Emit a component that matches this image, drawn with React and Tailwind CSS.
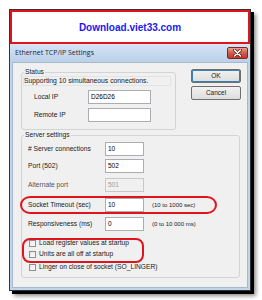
import React from 'react';

const font = { fontFamily: '"Liberation Sans", Arial, sans-serif' };

function TextBox({ value, disabled, className = '' }) {
  return (
    <div
      className={`h-[14px] border flex items-center pl-[2px] text-[6.5px] ${
        disabled
          ? 'border-[#c8c8c8] bg-[#f0f0f0] text-[#a0a0a0]'
          : 'border-[#abadb3] bg-white text-black'
      } ${className}`}
    >
      {value}
    </div>
  );
}

function Checkbox({ label, className = '' }) {
  return (
    <div className={`flex items-center h-[9px] ${className}`}>
      <div className="ml-[1px] w-[7px] h-[7px] border border-[#8e8f8f] bg-gradient-to-br from-[#e6e6e6] to-white" />
      <span className="ml-[3px] text-[6.7px] text-[#222]">{label}</span>
    </div>
  );
}

function Field({ label, value, hint, disabled, className = '' }) {
  return (
    <div className={`flex items-center ${className}`}>
      <span className={`w-[77px] text-[6.7px] ${disabled ? 'text-[#555]' : 'text-[#222]'}`}>{label}</span>
      <TextBox value={value} disabled={disabled} className="w-[39px]" />
      {hint && <span className="ml-[8px] text-[6px] text-[#222]">{hint}</span>}
    </div>
  );
}

export default function App() {
  return (
    <div className="w-[262px] h-[300px] bg-white pt-[9px] pl-[9px]" style={font}>
      <div className="w-[242px] h-[282px] border border-[#333] shadow-[3px_3px_0_#000,5px_5px_4px_rgba(0,0,0,0.45)] flex flex-col">
        {/* banner */}
        <div className="h-[34px] bg-white border-2 border-[#e0141c] flex items-center justify-center">
          <span className="text-[10px] font-bold text-[#1a1aef]">Download.viet33.com</span>
        </div>

        {/* title bar */}
        <div className="h-[18px] bg-gradient-to-b from-[#d6e4f4] to-[#bad0ea] flex items-start pl-[5px] pr-[2px]">
          <span
            className="mt-[5px] text-[7px] text-[#1d2a3a] leading-[8px]"
            style={{ fontFamily: '"Open Sans", "DejaVu Sans", sans-serif' }}
          >
            Ethernet TCP/IP Settings
          </span>
          <div className="ml-auto mt-[3px] w-[21px] h-[12px] rounded-[2px] border border-[#7a2a22] bg-gradient-to-b from-[#e8a094] via-[#cf5a4a] to-[#c0392b] flex items-center justify-center">
            <svg width="9" height="8" viewBox="0 0 9 8">
              <path d="M1.5 1 L7.5 7 M7.5 1 L1.5 7" stroke="#5a1a14" strokeWidth="3" strokeLinecap="round" />
              <path d="M1.5 1 L7.5 7 M7.5 1 L1.5 7" stroke="#fff" strokeWidth="1.6" strokeLinecap="round" />
            </svg>
          </div>
        </div>

        {/* frame + body */}
        <div className="flex-1 bg-[#bfd5ec] px-[2px] pb-[2px] flex">
          <div className="flex-1 relative bg-[#f0f0f0] border border-[#a7b9cc] pt-[5px]">
            <div className="flex">
              <fieldset className="ml-[8px] w-[155px] h-[62px] border border-[#d3d3d3] rounded-[3px] px-[1px]">
                <legend className="ml-[1px] px-[1px] text-[6.7px] leading-[8px] text-[#222]">Status</legend>
                <div className="h-[10px] border border-[#e3e3e3] w-[148px] flex items-center text-[6.8px] text-[#222]">
                  Supporting 10 simultaneous connections.
                </div>
                <div className="flex items-center mt-[4px]">
                  <span className="ml-[11px] w-[54px] text-[6.7px] text-[#222]">Local IP</span>
                  <TextBox value="D26D26" className="w-[63px]" />
                </div>
                <div className="flex items-center mt-[4px]">
                  <span className="ml-[11px] w-[54px] text-[6.7px] text-[#222]">Remote IP</span>
                  <TextBox value="" className="w-[63px]" />
                </div>
              </fieldset>

              <div className="ml-[15px] mt-[1px] flex flex-col gap-[3px]">
                <div className="w-[50px] h-[14px] border border-[#707070] rounded-[2px] bg-gradient-to-b from-[#f2f2f2] to-[#dddddd] shadow-[inset_0_0_0_1px_#3c7fb1] flex items-center justify-center text-[6.5px] text-[#222]">
                  OK
                </div>
                <div className="w-[50px] h-[14px] border border-[#707070] rounded-[2px] bg-gradient-to-b from-[#f2f2f2] to-[#dddddd] flex items-center justify-center text-[6.5px] text-[#222]">
                  Cancel
                </div>
              </div>
            </div>

            <fieldset className="ml-[8px] mt-[1px] w-[219px] h-[147px] border border-[#d3d3d3] rounded-[3px] pl-[6px]">
              <legend className="ml-[-4px] px-[1px] text-[6.7px] leading-[8px] text-[#222]">Server settings</legend>
              <Field label="# Server connections" value="10" className="mt-[3px]" />
              <Field label="Port (502)" value="502" className="mt-[3px]" />
              <Field label="Alternate port" value="501" disabled className="mt-[5px]" />
              <Field label="Socket Timeout (sec)" value="10" hint="(10 to 1000 sec)" className="mt-[6px]" />
              <Field label="Responsiveness (ms)" value="0" hint="(0 to 10 000 ms)" className="mt-[5px]" />
              <Checkbox label="Load register values at startup" className="mt-[8px]" />
              <Checkbox label="Units are all off at startup" className="mt-[2px]" />
              <Checkbox label="Linger on close of socket (SO_LINGER)" className="mt-[4px]" />
            </fieldset>

            {/* red highlight marks */}
            <div className="absolute left-[7px] top-[133px] w-[197px] h-[18px] border-2 border-[#e0141c] rounded-[10px/9px]" />
            <div className="absolute left-[9px] top-[175px] w-[122px] h-[25px] border-2 border-[#e0141c] rounded-[8px]" />
          </div>
        </div>
      </div>
    </div>
  );
}
